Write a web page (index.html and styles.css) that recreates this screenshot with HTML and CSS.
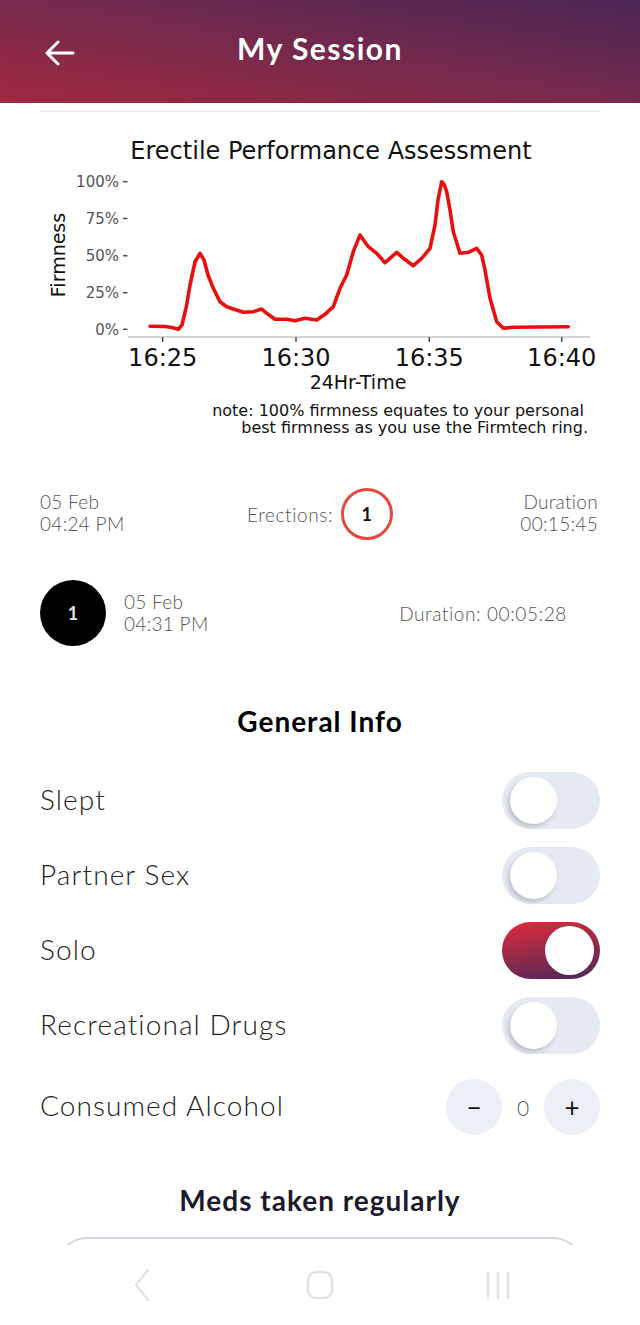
FILE: index.html
```html
<!DOCTYPE html>
<html lang="en">
<head>
  <meta charset="UTF-8" />
  <meta name="viewport" content="width=device-width, initial-scale=1.0"/>
  <title>My Session</title>
  <link rel="stylesheet" href="styles.css">
</head>
<body>

<header class="topbar">
  <button class="back" aria-label="Back">
    <svg width="30" height="26" viewBox="0 0 30 26">
      <path d="M28 13 H3 M13 2 L2 13 L13 24" fill="none" stroke="#fff" stroke-width="3" stroke-linecap="round" stroke-linejoin="round"/>
    </svg>
  </button>
  <h1>My Session</h1>
  <span></span>
</header>

<main class="content">

  <section class="chart-card">
    <!-- chart drawn in page coordinates -->
    <svg class="chart" viewBox="40 112 560 330" width="560" height="330">
      <text class="chart-title" x="331" y="159">Erectile Performance Assessment</text>

      <g class="ytick">
        <text x="119" y="187">100%</text>
        <text x="119" y="223.5">75%</text>
        <text x="119" y="261">50%</text>
        <text x="119" y="298">25%</text>
        <text x="119" y="334.5">0%</text>
      </g>
      <g stroke="#555" stroke-width="1.6">
        <line x1="123" y1="181.7" x2="127.5" y2="181.7"/>
        <line x1="123" y1="218.5" x2="127.5" y2="218.5"/>
        <line x1="123" y1="255.7" x2="127.5" y2="255.7"/>
        <line x1="123" y1="292.7" x2="127.5" y2="292.7"/>
        <line x1="123" y1="329.3" x2="127.5" y2="329.3"/>
      </g>

      <text class="ylabel" x="65" y="255" transform="rotate(-90 65 255)">Firmness</text>

      <line x1="128" y1="337" x2="590" y2="337" stroke="#c4c4c4" stroke-width="1.6"/>
      <g stroke="#444" stroke-width="1.4">
        <line x1="162.7" y1="337" x2="162.7" y2="342"/>
        <line x1="296" y1="337" x2="296" y2="342"/>
        <line x1="429.3" y1="337" x2="429.3" y2="342"/>
        <line x1="561.7" y1="337" x2="561.7" y2="342"/>
      </g>
      <g class="xtick">
        <text x="162.7" y="365.5">16:25</text>
        <text x="296" y="365.5">16:30</text>
        <text x="429.3" y="365.5">16:35</text>
        <text x="561.7" y="365.5">16:40</text>
      </g>
      <text class="xlabel" x="358" y="389">24Hr-Time</text>

      <polyline class="firmness" points="150,326.3 165,326.5 172,327.5 178.3,329.3 182,325 186.7,305 190,285 195,262 200,253.3 204,260 208,275 213.3,288.3 220,301.7 226.7,306.7 233.3,309 243.3,312.3 253.3,311.7 261.7,309 266.7,313.3 275,319.3 286.7,319.3 295,320.7 305,318.3 316.7,320 325,314.3 333.3,306.7 340,288.3 346.7,275 353.3,251.7 360,235 368.3,246.7 376.7,253.3 385,262.7 390,258.3 396.7,252.3 403.3,258.3 413.3,265.7 421.7,258.3 430,248.3 435,225 438,200 441.7,181.7 444,184 446.7,191.7 450,210 453.3,231.7 460,253.3 468.3,252.3 476.7,248.3 481.7,255 485,270 490,298.3 496.7,321.7 503.3,328.3 513.3,327.3 568.3,326.7"/>

      <g class="note">
        <text x="584" y="416">note: 100% firmness equates to your personal</text>
        <text x="588" y="433">best firmness as you use the Firmtech ring.</text>
      </g>
    </svg>
  </section>

  <section class="summary">
    <div class="stamp">05 Feb<br>04:24 PM</div>
    <div class="count">Erections: <span class="count-ring">1</span></div>
    <div class="stamp right">Duration<br>00:15:45</div>
  </section>

  <section class="erection">
    <span class="badge">1</span>
    <div class="stamp">05 Feb<br>04:31 PM</div>
    <div class="erection-duration">Duration: 00:05:28</div>
  </section>

  <h2 class="section-title">General Info</h2>

  <ul class="info-list">
    <li><span class="label">Slept</span><span class="switch"></span></li>
    <li><span class="label">Partner Sex</span><span class="switch"></span></li>
    <li><span class="label">Solo</span><span class="switch on"></span></li>
    <li><span class="label">Recreational Drugs</span><span class="switch"></span></li>
    <li class="alcohol">
      <span class="label">Consumed Alcohol</span>
      <div class="stepper">
        <button>&minus;</button>
        <span class="qty">0</span>
        <button>+</button>
      </div>
    </li>
  </ul>

  <h2 class="section-title meds">Meds taken regularly</h2>
  <div class="meds-card"></div>

</main>

<nav class="sysnav">
  <svg width="40" height="40" viewBox="0 0 40 40"><polyline points="26,5 14,20 26,35" fill="none" stroke="#e3e3e3" stroke-width="2.5" stroke-linejoin="round" stroke-linecap="round"/></svg>
  <svg width="40" height="40" viewBox="0 0 40 40"><rect x="8" y="7" width="24" height="26" rx="8" fill="none" stroke="#e3e3e3" stroke-width="2.5"/></svg>
  <svg width="40" height="40" viewBox="0 0 40 40"><g stroke="#e3e3e3" stroke-width="2.5" stroke-linecap="round"><line x1="10" y1="8" x2="10" y2="33"/><line x1="20" y1="8" x2="20" y2="33"/><line x1="30" y1="8" x2="30" y2="33"/></g></svg>
</nav>

</body>
</html>
```

FILE: styles.css
```css
body {
  margin: 0;
  background-color: #fff;
  font-family: 'Lato', sans-serif;
  color: #222;
}

.topbar {
  height: 103px;
  display: grid;
  grid-template-columns: 1fr auto 1fr;
  align-items: center;
  padding: 0 40px;
  background: linear-gradient(to top right, #a02940 0%, #7a2a4b 45%, #4a2555 100%);
}

.back {
  justify-self: start;
  display: flex;
  padding: 0;
  margin-left: 5px;
  margin-top: 2px;
  border: none;
  background: none;
}

.topbar h1 {
  margin: 0;
  margin-top: -8px;
  color: #fff;
  font-size: 30px;
  font-weight: 700;
  letter-spacing: 1.5px;
}

.content {
  padding: 0 40px;
}

.chart-card {
  margin-top: 7px;
  border-top: 2px solid #eaedf1;
}

.chart {
  display: block;
  font-family: 'DejaVu Sans', sans-serif;
}

.chart-title {
  font-size: 24px;
  fill: #111;
  text-anchor: middle;
}

.ytick text {
  font-size: 15px;
  fill: #555;
  text-anchor: end;
}

.ylabel {
  font-size: 19px;
  fill: #111;
  text-anchor: middle;
}

.xtick text {
  font-size: 24px;
  fill: #111;
  text-anchor: middle;
}

.xlabel {
  font-size: 19px;
  fill: #111;
  text-anchor: middle;
}

.firmness {
  fill: none;
  stroke: #e8100e;
  stroke-width: 3.6;
  stroke-linejoin: round;
  stroke-linecap: round;
}

.note text {
  font-size: 16px;
  fill: #111;
  text-anchor: end;
}

.summary {
  margin-top: 46px;
  height: 52px;
  display: grid;
  grid-template-columns: 1fr auto 1fr;
  align-items: center;
}

.stamp {
  font-size: 19px;
  font-weight: 300;
  line-height: 22px;
  letter-spacing: 0.3px;
  color: #555;
}

.summary .stamp {
  margin-top: -3px;
}

.stamp.right {
  text-align: right;
  margin-right: 2px;
}

.count {
  display: flex;
  align-items: center;
  gap: 8px;
  font-size: 19px;
  font-weight: 300;
  letter-spacing: 0.6px;
  color: #555;
}

.count-ring {
  width: 46px;
  height: 46px;
  border: 3px solid #e24a40;
  border-radius: 50%;
  display: flex;
  align-items: center;
  justify-content: center;
  color: #111;
  font-weight: 700;
  font-size: 18px;
}

.erection {
  margin-top: 40px;
  height: 66px;
  display: flex;
  align-items: center;
}

.badge {
  width: 66px;
  height: 66px;
  border-radius: 50%;
  background-color: #000;
  color: #dfe7ef;
  font-weight: 700;
  font-size: 18px;
  display: flex;
  align-items: center;
  justify-content: center;
  margin-right: 18px;
}

.erection-duration {
  margin-left: auto;
  padding-right: 33px;
  font-size: 19px;
  font-weight: 300;
  letter-spacing: 0.6px;
  color: #555;
}

.section-title {
  margin: 60px 0 0;
  text-align: center;
  font-size: 28px;
  font-weight: 700;
  line-height: 30px;
  letter-spacing: 1px;
  color: #000;
}

.section-title.meds {
  margin-top: 50px;
  color: #1b1a2c;
}

.info-list {
  list-style: none;
  margin: 36px 0 0;
  padding: 0;
  display: flex;
  flex-direction: column;
  gap: 18px;
}

.info-list li {
  height: 57px;
  display: flex;
  align-items: center;
  justify-content: space-between;
  font-size: 28px;
  font-weight: 300;
  letter-spacing: 1.1px;
  color: #222;
}

.label {
  margin-top: -4px;
}

.switch {
  position: relative;
  width: 98px;
  height: 57px;
  border-radius: 29px;
  background-color: #e5e9f1;
}

.switch::after {
  content: "";
  position: absolute;
  left: 8px;
  top: 5px;
  width: 47px;
  height: 47px;
  border-radius: 50%;
  background-color: #fff;
  box-shadow: -2px 3px 4px rgba(0, 0, 0, 0.18);
}

.switch.on {
  background: linear-gradient(170deg, #e5283a 0%, #9c2b47 45%, #4a2659 100%);
}

.switch.on::after {
  left: 43px;
  top: 4px;
  width: 49px;
  height: 49px;
  box-shadow: none;
}

.info-list li.alcohol {
  height: 56px;
  margin-top: 7px;
}

.stepper {
  display: flex;
  align-items: center;
  letter-spacing: 0;
}

.stepper button {
  width: 56px;
  height: 56px;
  border: none;
  border-radius: 50%;
  background-color: #edeff6;
  color: #111;
  font-family: 'Lato', sans-serif;
  font-size: 26px;
  padding: 0;
}

.qty {
  width: 42px;
  text-align: center;
  font-size: 21px;
  color: #555;
}

.meds-card {
  margin: 22px 17px 0;
  height: 150px;
  border: 2px solid #d3d9e1;
  border-radius: 30px;
}

.sysnav {
  position: fixed;
  left: 0;
  right: 0;
  bottom: 0;
  height: 80px;
  background-color: #fff;
  display: flex;
  justify-content: center;
  align-items: center;
  gap: 138px;
}
```
